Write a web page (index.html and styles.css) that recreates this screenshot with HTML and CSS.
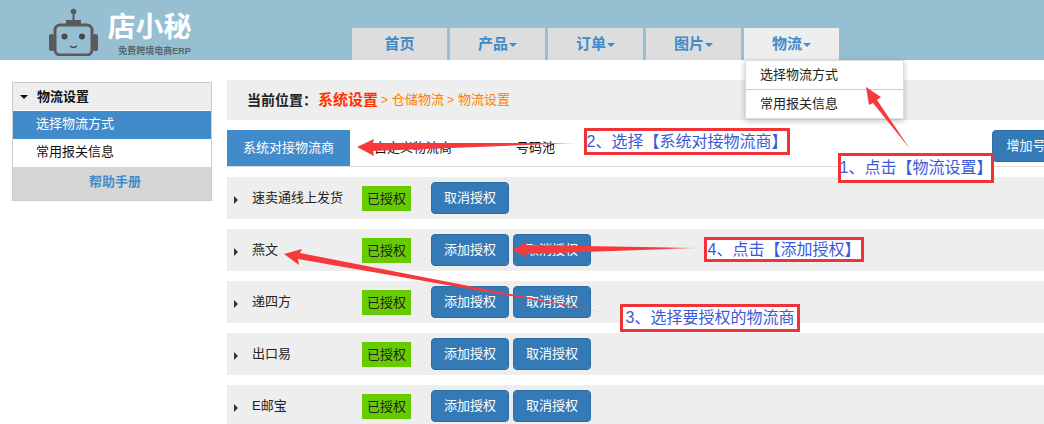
FILE: index.html
```html
<!DOCTYPE html>
<html lang="zh">
<head>
<meta charset="utf-8">
<title>物流设置</title>
<link rel="stylesheet" href="styles.css">
</head>
<body>
<header class="header">
  <div class="logo">
    <svg class="robot" width="50" height="48" viewBox="0 0 50 48">
      <circle cx="24.500" cy="3.500" r="2.800" fill="#5a5a5a"/>
      <rect x="23.500" y="5" width="2" height="9" fill="#5a5a5a"/>
      <rect x="17" y="12" width="15" height="5" fill="#5a5a5a"/>
      <rect x="0" y="26" width="5" height="17" rx="2" fill="#5a5a5a"/>
      <rect x="44" y="26" width="5" height="17" rx="2" fill="#5a5a5a"/>
      <rect x="6" y="17" width="37" height="30" rx="5" fill="#96bfd2" stroke="#5a5a5a" stroke-width="3"/>
      <circle cx="15.500" cy="28.500" r="3" fill="#4a4a4a"/>
      <circle cx="33" cy="28.500" r="3" fill="#4a4a4a"/>
      <path d="M21 38q3.500 3 7 0" fill="none" stroke="#4a4a4a" stroke-width="1.500"/>
    </svg>
    <div class="brand">
      <div class="brand-name">店小秘</div>
      <div class="brand-sub">免费跨境电商ERP</div>
    </div>
  </div>
  <nav class="nav">
    <a class="nav-tab">首页</a>
    <a class="nav-tab">产品<i class="caret"></i></a>
    <a class="nav-tab">订单<i class="caret"></i></a>
    <a class="nav-tab">图片<i class="caret"></i></a>
    <a class="nav-tab nav-tab-on">物流<i class="caret"></i>
      <div class="menu">
        <div class="menu-item menu-item-line">选择物流方式</div>
        <div class="menu-item">常用报关信息</div>
      </div>
    </a>
  </nav>
</header>
<div class="page">
  <aside class="side">
    <div class="side-head"><i class="tri-down"></i>物流设置</div>
    <div class="side-item side-item-on">选择物流方式</div>
    <div class="side-item">常用报关信息</div>
    <div class="side-help">帮助手册</div>
  </aside>
  <main class="main">
    <div class="crumb">
      <b class="crumb-label">当前位置：</b><b class="crumb-root">系统设置</b>
      <span class="crumb-sep">&gt;</span><span class="crumb-link">仓储物流</span>
      <span class="crumb-sep">&gt;</span><span class="crumb-link">物流设置</span>
    </div>
    <div class="tabs">
      <div class="tab tab-on">系统对接物流商</div>
      <div class="tab">自定义物流商</div>
      <div class="tab tab-last">号码池</div>
      <button class="btn btn-add">增加号码池</button>
    </div>
    <div class="row">
      <i class="tri-right"></i><span class="name">速卖通线上发货</span><span class="badge">已授权</span>
      <button class="btn btn-first">取消授权</button>
    </div>
    <div class="row">
      <i class="tri-right"></i><span class="name">燕文</span><span class="badge">已授权</span>
      <button class="btn btn-first">添加授权</button><button class="btn">取消授权</button>
    </div>
    <div class="row">
      <i class="tri-right"></i><span class="name">递四方</span><span class="badge">已授权</span>
      <button class="btn btn-first">添加授权</button><button class="btn">取消授权</button>
    </div>
    <div class="row">
      <i class="tri-right"></i><span class="name">出口易</span><span class="badge">已授权</span>
      <button class="btn btn-first">添加授权</button><button class="btn">取消授权</button>
    </div>
    <div class="row">
      <i class="tri-right"></i><span class="name">E邮宝</span><span class="badge">已授权</span>
      <button class="btn btn-first">添加授权</button><button class="btn">取消授权</button>
    </div>
  </main>
</div>
<div class="note note-1">1、点击【物流设置】</div>
<div class="note note-2">2、选择【系统对接物流商】</div>
<div class="note note-3">3、选择要授权的物流商</div>
<div class="note note-4">4、点击【添加授权】</div>
<svg class="arrows" width="1044" height="424" viewBox="0 0 1044 424">
  <defs>
    <linearGradient id="fade2" gradientUnits="userSpaceOnUse" x1="357" y1="147" x2="577" y2="143">
      <stop offset="0.800" stop-color="#f63a3c"/><stop offset="1" stop-color="#f63a3c" stop-opacity="0.300"/>
    </linearGradient>
    <linearGradient id="fade3" gradientUnits="userSpaceOnUse" x1="284" y1="254" x2="608" y2="313">
      <stop offset="0.900" stop-color="#f63a3c"/><stop offset="1" stop-color="#f63a3c" stop-opacity="0.300"/>
    </linearGradient>
    <linearGradient id="fade4" gradientUnits="userSpaceOnUse" x1="512" y1="250" x2="699" y2="248">
      <stop offset="0.800" stop-color="#f63a3c"/><stop offset="1" stop-color="#f63a3c" stop-opacity="0.300"/>
    </linearGradient>
  </defs>
  <polygon fill="#f63a3c" points="866,87 881,97 877,100 910,149 873,103 869,105"/>
  <polygon fill="url(#fade2)" points="357,147 374,139 373,143 577,143 373,151 374,156"/>
  <polygon fill="url(#fade3)" points="284,254 302,249 300,253 608,313 298,259 299,265"/>
  <polygon fill="url(#fade4)" points="512,250 527,242 526,245 699,248 526,254 527,257"/>
</svg>
</body>
</html>
```
FILE: styles.css
```css
* { box-sizing: border-box; }
html, body { margin: 0; height: 424px; overflow: hidden; }
body {
  position: relative;
  width: 1044px;
  background: #fff;
  color: #222;
  font: 13px/1.2 "Liberation Sans", "Noto Sans CJK SC", sans-serif;
}
i { display: block; }

.header { display: flex; height: 60px; background: #96bfd2; }
.logo { display: flex; width: 352px; padding: 8px 0 0 49px; }
.robot { flex: none; }
.brand { margin-left: 8px; width: 85px; text-align: center; }
.brand-name {
  color: #fff;
  font-size: 28px;
  font-weight: 700;
  line-height: 34px;
  margin-top: 3px;
}
.brand-sub {
  margin: 0 0 0 10px;
  color: #56666e;
  font-size: 9px;
  font-weight: 700;
  line-height: 12px;
  white-space: nowrap;
}

.nav { display: flex; gap: 3px; align-self: flex-end; }
.nav-tab {
  position: relative;
  display: flex;
  align-items: center;
  justify-content: center;
  width: 95px;
  height: 32px;
  background: #ddd;
  color: #428bca;
  font-size: 15px;
  font-weight: 700;
}
.nav-tab-on { background: #eee; }
.caret {
  margin: 2px 0 0 1px;
  border: 4px solid transparent;
  border-top-color: #428bca;
  border-bottom: 0;
}
.menu {
  position: absolute;
  z-index: 2;
  top: 32px;
  left: 1px;
  width: 159px;
  background: #fff;
  border: 1px solid #ddd;
  box-shadow: 0 2px 6px rgba(0, 0, 0, 0.250);
  color: #222;
  font-size: 13px;
  font-weight: 400;
}
.menu-item { height: 28.500px; padding-left: 14px; line-height: 27px; }
.menu-item-line { border-bottom: 1px solid #ccc; }

.page { display: flex; align-items: flex-start; padding-left: 12px; }

.side {
  flex: none;
  width: 200px;
  margin-top: 22px;
  background: #fff;
  border: 1px solid #ccc;
}
.side-head {
  display: flex;
  align-items: center;
  height: 27px;
  padding-left: 7px;
  background: #eee;
  color: #111;
  font-weight: 700;
}
.tri-down {
  margin-right: 9px;
  border: 4px solid transparent;
  border-top-color: #111;
  border-bottom: 0;
}
.side-item { height: 28px; padding-left: 23px; line-height: 26px; color: #111; }
.side-item-on { background: #428bca; color: #fff; margin-top: 1px; }
.side-help {
  height: 33px;
  padding-left: 6px;
  background: #d6d6d6;
  color: #428bca;
  font-weight: 700;
  line-height: 30px;
  text-align: center;
}

.main { flex: none; width: 817px; margin: 20px 0 0 15px; }

.crumb {
  display: flex;
  align-items: center;
  height: 40px;
  margin-bottom: 10px;
  padding-left: 20px;
  background: #eee;
}
.crumb-label { width: 71px; color: #222; font-size: 14px; }
.crumb-root { color: #ff3300; font-size: 15px; white-space: nowrap; }
.crumb-sep { margin: 0 4px 0 3px; color: #ff8000; font-size: 12px; }
.crumb-link { color: #ff8000; font-size: 13px; }

.tabs {
  display: flex;
  height: 37px;
  margin-bottom: 10px;
  border-bottom: 1px solid #ddd;
}
.tab { height: 36px; padding: 0 24px; color: #111; line-height: 36px; white-space: nowrap; }
.tab-on { width: 123px; padding: 0 16px; background: #428bca; color: #fff; }
.tab-last { margin-left: 16px; }

.btn {
  flex: none;
  width: 78px;
  height: 32px;
  margin-left: 4px;
  padding: 0;
  background: #337ab7;
  border: 1px solid #2e6da4;
  border-radius: 4px;
  color: #fff;
  font: inherit;
}
.btn-first { margin-left: 20px; }
.btn-add { width: 94px; height: 32px; margin: 0 -42px 0 auto; }

.row {
  display: flex;
  align-items: center;
  height: 42px;
  margin-bottom: 10px;
  padding-left: 7px;
  background: #eee;
}
.tri-right {
  margin-top: 4px;
  border: 4px solid transparent;
  border-left-color: #333;
  border-right: 0;
}
.name { width: 110px; margin-left: 14px; color: #222; white-space: nowrap; }
.badge {
  width: 49px;
  height: 25px;
  background: #66cc00;
  color: #222;
  line-height: 25px;
  text-align: center;
}

.note {
  position: absolute;
  z-index: 3;
  display: flex;
  align-items: center;
  justify-content: center;
  background: #fff;
  border: 3px solid #f03338;
  color: #3a5bd8;
  font-size: 16px;
  white-space: nowrap;
}
.note-1 { left: 838px; top: 153px; width: 156px; height: 30px; }
.note-2 { left: 584px; top: 128px; width: 206px; height: 27px; }
.note-3 { left: 620px; top: 304px; width: 180px; height: 28px; }
.note-4 { left: 704px; top: 237px; width: 160px; height: 25px; }

.arrows { position: absolute; z-index: 4; left: 0; top: 0; pointer-events: none; }
```
